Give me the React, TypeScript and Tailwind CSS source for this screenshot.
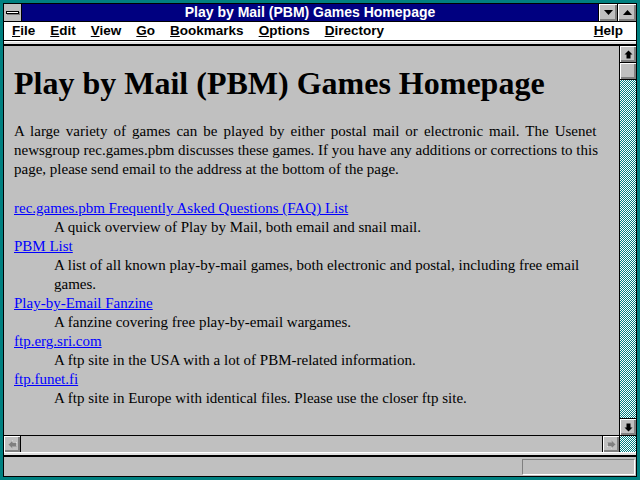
const serif = "font-['Liberation_Serif','Times_New_Roman',serif]";
const sans = "font-['Liberation_Sans',Arial,sans-serif]";

const bevel = "bg-[#c0c0c0] shadow-[inset_1px_1px_#ffffff,inset_-1px_-1px_#808080,inset_-2px_-2px_#808080]";
const dither = "bg-[repeating-conic-gradient(#008080_0_25%,#ffffff_0_50%)] bg-[length:2px_2px]";

function Arrow({ dir, dim }: { dir: "up" | "down" | "left" | "right"; dim?: boolean }) {
  const rot = { up: 0, down: 180, left: 270, right: 90 }[dir];
  const fill = dim ? "#808080" : "#000000";
  return (
    <svg width="9" height="9" viewBox="0 0 9 9" style={{ transform: `rotate(${rot}deg)` }}>
      {dim && <path d="M5 1 L9 5 H7 V9 H3 V5 H1 Z" fill="#ffffff" />}
      <path d="M4.5 0.5 L8.5 4.5 H6.5 V8.5 H2.5 V4.5 H0.5 Z" fill={fill} />
    </svg>
  );
}

function Tri({ up }: { up?: boolean }) {
  return (
    <svg width="9" height="5" viewBox="0 0 9 5">
      <path d={up ? "M4.5 0 L9 5 H0 Z" : "M0 0 H9 L4.5 5 Z"} fill="#000000" />
    </svg>
  );
}

function ScrollBtn({ dir, dim }: { dir: "up" | "down" | "left" | "right"; dim?: boolean }) {
  return (
    <div className={`w-[16px] h-[16px] flex items-center justify-center ${bevel}`}>
      <Arrow dir={dir} dim={dim} />
    </div>
  );
}

const menu = [
  ["F", "ile"],
  ["E", "dit"],
  ["V", "iew"],
  ["G", "o"],
  ["B", "ookmarks"],
  ["O", "ptions"],
  ["D", "irectory"],
];

const links = [
  {
    title: "rec.games.pbm Frequently Asked Questions (FAQ) List",
    text: ["A quick overview of Play by Mail, both email and snail mail."],
  },
  {
    title: "PBM List",
    text: ["A list of all known play-by-mail games, both electronic and postal, including free email", "games."],
  },
  {
    title: "Play-by-Email Fanzine",
    text: ["A fanzine covering free play-by-email wargames."],
  },
  {
    title: "ftp.erg.sri.com",
    text: ["A ftp site in the USA with a lot of PBM-related information."],
  },
  {
    title: "ftp.funet.fi",
    text: ["A ftp site in Europe with identical files. Please use the closer ftp site."],
  },
];

export default function App() {
  return (
    <div className="w-[640px] h-[480px] bg-[#008080] p-[3px] overflow-hidden">
      <div className="h-full flex flex-col border border-black bg-[#c0c0c0]">
        {/* title bar */}
        <div className="h-[18px] flex border-b border-black">
          <div className="w-[18px] bg-[#c0c0c0] border-r border-black flex items-center justify-center">
            <div className="w-[13px] h-[3px] bg-white border border-black shadow-[1px_1px_#808080]" />
          </div>
          <div className={`flex-1 bg-[#000080] text-white text-[14px] font-bold leading-[17px] text-center ${sans}`}>
            Play by Mail (PBM) Games Homepage
          </div>
          <div className={`w-[19px] border-l border-black flex items-center justify-center ${bevel}`}>
            <Tri />
          </div>
          <div className={`w-[19px] border-l border-black flex items-center justify-center ${bevel}`}>
            <Tri up />
          </div>
        </div>

        {/* menu bar */}
        <div className={`h-[19px] bg-white border-b border-black flex items-center pl-[8px] pr-[13px] text-[13.5px] font-bold text-black ${sans}`}>
          <div className="flex gap-[15px]">
            {menu.map(([k, rest]) => (
              <span key={k}>
                <span className="underline">{k}</span>
                {rest}
              </span>
            ))}
          </div>
          <span className="ml-auto">
            <span className="underline">H</span>elp
          </span>
        </div>

        {/* toolbar strip */}
        <div className="h-[5px] bg-[#dfdfdf] border-t border-white border-b-2 border-b-black" />

        {/* content */}
        <div className="flex-1 flex min-h-0">
          <div className={`flex-1 overflow-hidden px-[10px] pt-[19px] text-black whitespace-nowrap ${serif}`}>
            <h1 className="text-[32px] leading-[36px] font-bold">Play by Mail (PBM) Games Homepage</h1>
            <p className="mt-[21px] text-[15px] leading-[19px]">
              <span className="[word-spacing:2.3px]">
                A large variety of games can be played by either postal mail or electronic mail. The Usenet
              </span>
              <br />
              newsgroup rec.games.pbm discusses these games. If you have any additions or corrections to this
              <br />
              page, please send email to the address at the bottom of the page.
            </p>
            <dl className="mt-[20px] text-[15px] leading-[19px]">
              {links.map((l) => (
                <div key={l.title}>
                  <dt>
                    <a href="#" className="text-[#0000ff] underline">
                      {l.title}
                    </a>
                  </dt>
                  <dd className="ml-[40px]">
                    {l.text.map((t) => (
                      <div key={t}>{t}</div>
                    ))}
                  </dd>
                </div>
              ))}
            </dl>
          </div>
          <div className="w-[17px] border-l border-black flex flex-col">
            <div className="border-b border-black">
              <ScrollBtn dir="up" />
            </div>
            <div className="border-b border-black">
              <div className={`w-[16px] h-[16px] ${bevel}`} />
            </div>
            <div className={`flex-1 ${dither}`} />
            <div className="border-t border-black">
              <ScrollBtn dir="down" />
            </div>
          </div>
        </div>

        {/* horizontal scrollbar */}
        <div className="h-[17px] border-t border-black flex">
          <div className="border-r border-black">
            <ScrollBtn dir="left" dim />
          </div>
          <div className="flex-1 bg-[#c0c0c0]" />
          <div className="border-l border-black">
            <ScrollBtn dir="right" dim />
          </div>
          <div className={`w-[17px] border-l border-black ${dither}`} />
        </div>

        {/* status strip */}
        <div className="h-[5px] bg-[#dfdfdf] border-t border-white border-b-2 border-b-black" />
        <div className="flex-1 max-h-[19px] min-h-[19px] flex items-center justify-end pr-[1px]">
          <div className="w-[113px] h-[16px] border border-[#808080] border-r-white border-b-white" />
        </div>
      </div>
    </div>
  );
}
